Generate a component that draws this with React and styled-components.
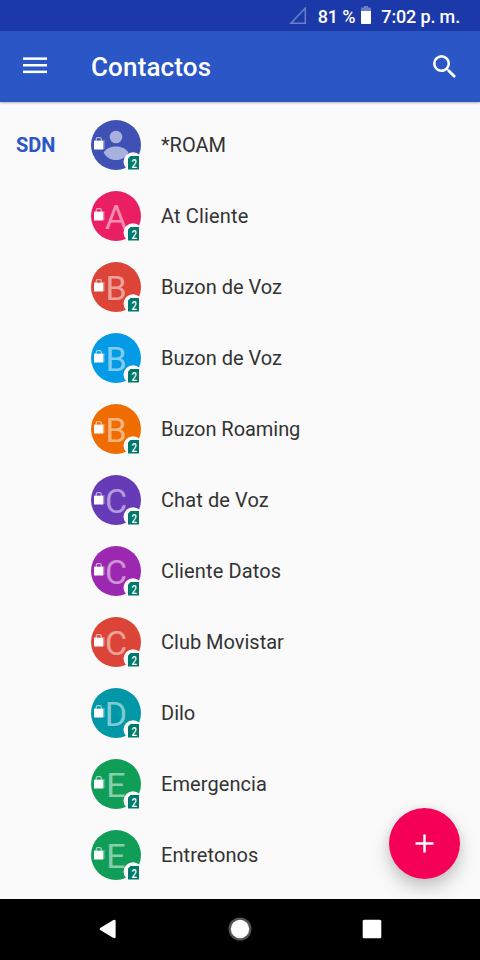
import styled, { createGlobalStyle } from "styled-components";

const GlobalStyle = createGlobalStyle`
  * {
    box-sizing: border-box;
  }
  body {
    margin: 0;
    background: #fafafa;
    font-family: Roboto, "Liberation Sans", sans-serif;
  }
`;

const Screen = styled.div`
  width: 480px;
  height: 960px;
  display: flex;
  flex-direction: column;
  overflow: hidden;
  position: relative;
  background: #fafafa;
`;

const StatusBar = styled.div`
  height: 31px;
  flex: none;
  display: flex;
  align-items: center;
  justify-content: flex-end;
  padding: 2px 20px 0 0;
  background: #1c39aa;
  color: #fff;
  font-size: 18px;
  font-weight: 500;
  white-space: nowrap;
`;

const SignalIcon = styled.svg`
  margin: -2px 11px 0 0;
`;

const BatteryIcon = styled.svg`
  margin: -4px 10px 0 6px;
`;

const Battery = styled.span`
  letter-spacing: -0.15px;
`;

const Clock = styled.span`
  letter-spacing: -0.15px;
`;

const Toolbar = styled.header`
  height: 71px;
  flex: none;
  display: flex;
  align-items: center;
  padding: 0 24px 0 23px;
  background: #2a56c6;
  box-shadow: 0 1px 2px rgba(0, 0, 0, 0.3);
  z-index: 1;
`;

const MenuIcon = styled.svg`
  margin-top: -3px;
`;

const Title = styled.h1`
  flex: 1;
  margin: 1px 0 0 44px;
  color: #fff;
  font-size: 26px;
  font-weight: 500;
  letter-spacing: 0.15px;
`;

const SearchIcon = styled.svg`
  margin-top: -1px;
`;

const List = styled.ul`
  flex: 1;
  min-height: 0;
  margin: 0;
  padding: 7px 0 0;
  list-style: none;
  overflow: hidden;
`;

const Row = styled.li`
  height: 71px;
  display: flex;
  align-items: center;
`;

const Section = styled.span`
  width: 91px;
  padding-left: 16px;
  color: #2a56c6;
  font-size: 20px;
  font-weight: 700;
`;

const Avatar = styled.div`
  position: relative;
  width: 50px;
  height: 50px;
  flex: none;
  display: flex;
  align-items: center;
  justify-content: center;
  border-radius: 50%;
  background: ${(props) => props.$color};
`;

const Letter = styled.span`
  color: rgba(255, 255, 255, 0.5);
  font-size: 34px;
  line-height: 50px;
  padding-top: 3px;
`;

const Overlay = styled.svg`
  position: absolute;
  left: 0;
  top: 0;
`;

const Name = styled.span`
  margin-left: 20px;
  color: #333;
  font-size: 20px;
  letter-spacing: ${(props) => props.$spacing || 0}px;
`;

const Fab = styled.button`
  position: absolute;
  right: 20px;
  top: 808px;
  width: 71px;
  height: 71px;
  padding: 0;
  display: flex;
  align-items: center;
  justify-content: center;
  border: none;
  border-radius: 50%;
  background: #f50057;
  box-shadow: 0 9px 18px rgba(0, 0, 0, 0.22), 0 0 8px rgba(0, 0, 0, 0.06);
`;

const NavBar = styled.nav`
  position: relative;
  height: 61px;
  flex: none;
  display: flex;
  align-items: center;
  justify-content: center;
  gap: 108px;
  padding-bottom: 1px;
  background: #000;
  z-index: 2;
`;

const contacts = [
  { name: "*ROAM", color: "#3f51b5", section: "SDN" },
  { name: "At Cliente", color: "#e91e63", spacing: 0.15 },
  { name: "Buzon de Voz", color: "#db4437" },
  { name: "Buzon de Voz", color: "#039be5" },
  { name: "Buzon Roaming", color: "#ef6c00", spacing: -0.05 },
  { name: "Chat de Voz", color: "#673ab7", spacing: 0.1 },
  { name: "Cliente Datos", color: "#9c27b0", spacing: 0.12 },
  { name: "Club Movistar", color: "#db4437" },
  { name: "Dilo", color: "#0097a7" },
  { name: "Emergencia", color: "#0f9d58", spacing: 0.08 },
  { name: "Entretonos", color: "#0f9d58", spacing: 0.08 },
];

const ContactAvatar = ({ contact }) => {
  const isLetter = /[A-Z]/.test(contact.name[0]);

  return (
    <Avatar $color={contact.color}>
      {isLetter && <Letter>{contact.name[0]}</Letter>}
      <Overlay width="50" height="50" viewBox="0 0 50 50">
        {!isLetter && (
          <g fill="#fff" fillOpacity="0.55">
            <circle cx="25" cy="17" r="6.3" />
            <path d="M12.7 32.5C14.5 28.5 19.5 26.4 25 26.4S35.5 28.5 37.3 32.5C35 37.4 30.5 40 25 40S15 37.4 12.7 32.5Z" />
          </g>
        )}
        {/* work profile bag */}
        <path d="M5.2 21V19.2Q5.2 17.6 6.8 17.6H8.7Q10.3 17.6 10.3 19.2V21" fill="none" stroke="#fff" strokeOpacity="0.6" strokeWidth="1.2" />
        <path d="M3 20H13.6V29H12.3V21H3Z" fill="#fff" fillOpacity="0.35" />
        <rect x="3" y="21" width="9.3" height="8.5" fill="#fff" />
        {/* SIM badge */}
        <circle cx="42" cy="41.7" r="9.5" fill="#fafafa" />
        <path d="M39.5 36H48V49.5H37V38.5Z" fill="#00796b" />
        <text transform="translate(43.2 47.5) scale(0.8 1)" fill="#fff" fontSize="12" fontWeight="500" textAnchor="middle">2</text>
      </Overlay>
    </Avatar>
  );
};

const App = () => {
  return (
    <>
      <GlobalStyle />
      <Screen>
        <StatusBar>
          <SignalIcon width="18" height="18" viewBox="0 0 18 18">
            <path d="M2 16.3H16.3V1Z" fill="none" stroke="#fff" strokeOpacity="0.35" strokeWidth="1.5" />
          </SignalIcon>
          <Battery>81 %</Battery>
          <BatteryIcon width="10" height="18" viewBox="0 0 10 18">
            <path d="M0 5V1.5H3V0H7V1.5H10V5Z" fill="#fff" fillOpacity="0.35" />
            <path d="M0 5H10V17Q10 18 9 18H1Q0 18 0 17Z" fill="#fff" />
          </BatteryIcon>
          <Clock>7:02 p. m.</Clock>
        </StatusBar>

        <Toolbar>
          <MenuIcon width="24" height="17" viewBox="0 0 24 17" fill="#fff">
            <rect y="0.4" width="24" height="2.5" />
            <rect y="7" width="24" height="2.5" />
            <rect y="13.6" width="24" height="2.5" />
          </MenuIcon>
          <Title>Contactos</Title>
          <SearchIcon width="23" height="23" viewBox="3 3 17.49 17.49" fill="#fff">
            <path d="M15.5 14h-.79l-.28-.27A6.471 6.471 0 0 0 16 9.5 6.5 6.5 0 1 0 9.5 16c1.61 0 3.09-.59 4.23-1.57l.27.28v.79l5 4.99L20.49 19l-4.99-5zm-6 0C7.01 14 5 11.99 5 9.5S7.01 5 9.5 5 14 7.01 14 9.5 11.99 14 9.5 14z" />
          </SearchIcon>
        </Toolbar>

        <List>
          {contacts.map((contact, index) => (
            <Row key={index}>
              <Section>{contact.section}</Section>
              <ContactAvatar contact={contact} />
              <Name $spacing={contact.spacing}>{contact.name}</Name>
            </Row>
          ))}
        </List>

        <Fab aria-label="+">
          <svg width="19" height="19" viewBox="0 0 19 19">
            <path d="M9.5 0.5V18.5M0.5 9.5H18.5" stroke="#fff" strokeWidth="2.5" />
          </svg>
        </Fab>

        <NavBar>
          <svg width="24" height="24" viewBox="0 0 24 24" fill="#fff">
            <path d="M4.2 11.1Q3 12 4.2 12.9L17 20.7Q19.6 21.9 19.6 20V4Q19.6 2.1 17 3.3Z" />
          </svg>
          <svg width="24" height="24" viewBox="0 0 24 24">
            <circle cx="12" cy="12" r="11.5" fill="#555" />
            <circle cx="12" cy="12" r="9.2" fill="#fff" />
          </svg>
          <svg width="24" height="24" viewBox="0 0 24 24">
            <rect x="2.7" y="2.7" width="18.6" height="18.6" rx="1.5" fill="#fff" />
          </svg>
        </NavBar>
      </Screen>
    </>
  );
};

export default App;
